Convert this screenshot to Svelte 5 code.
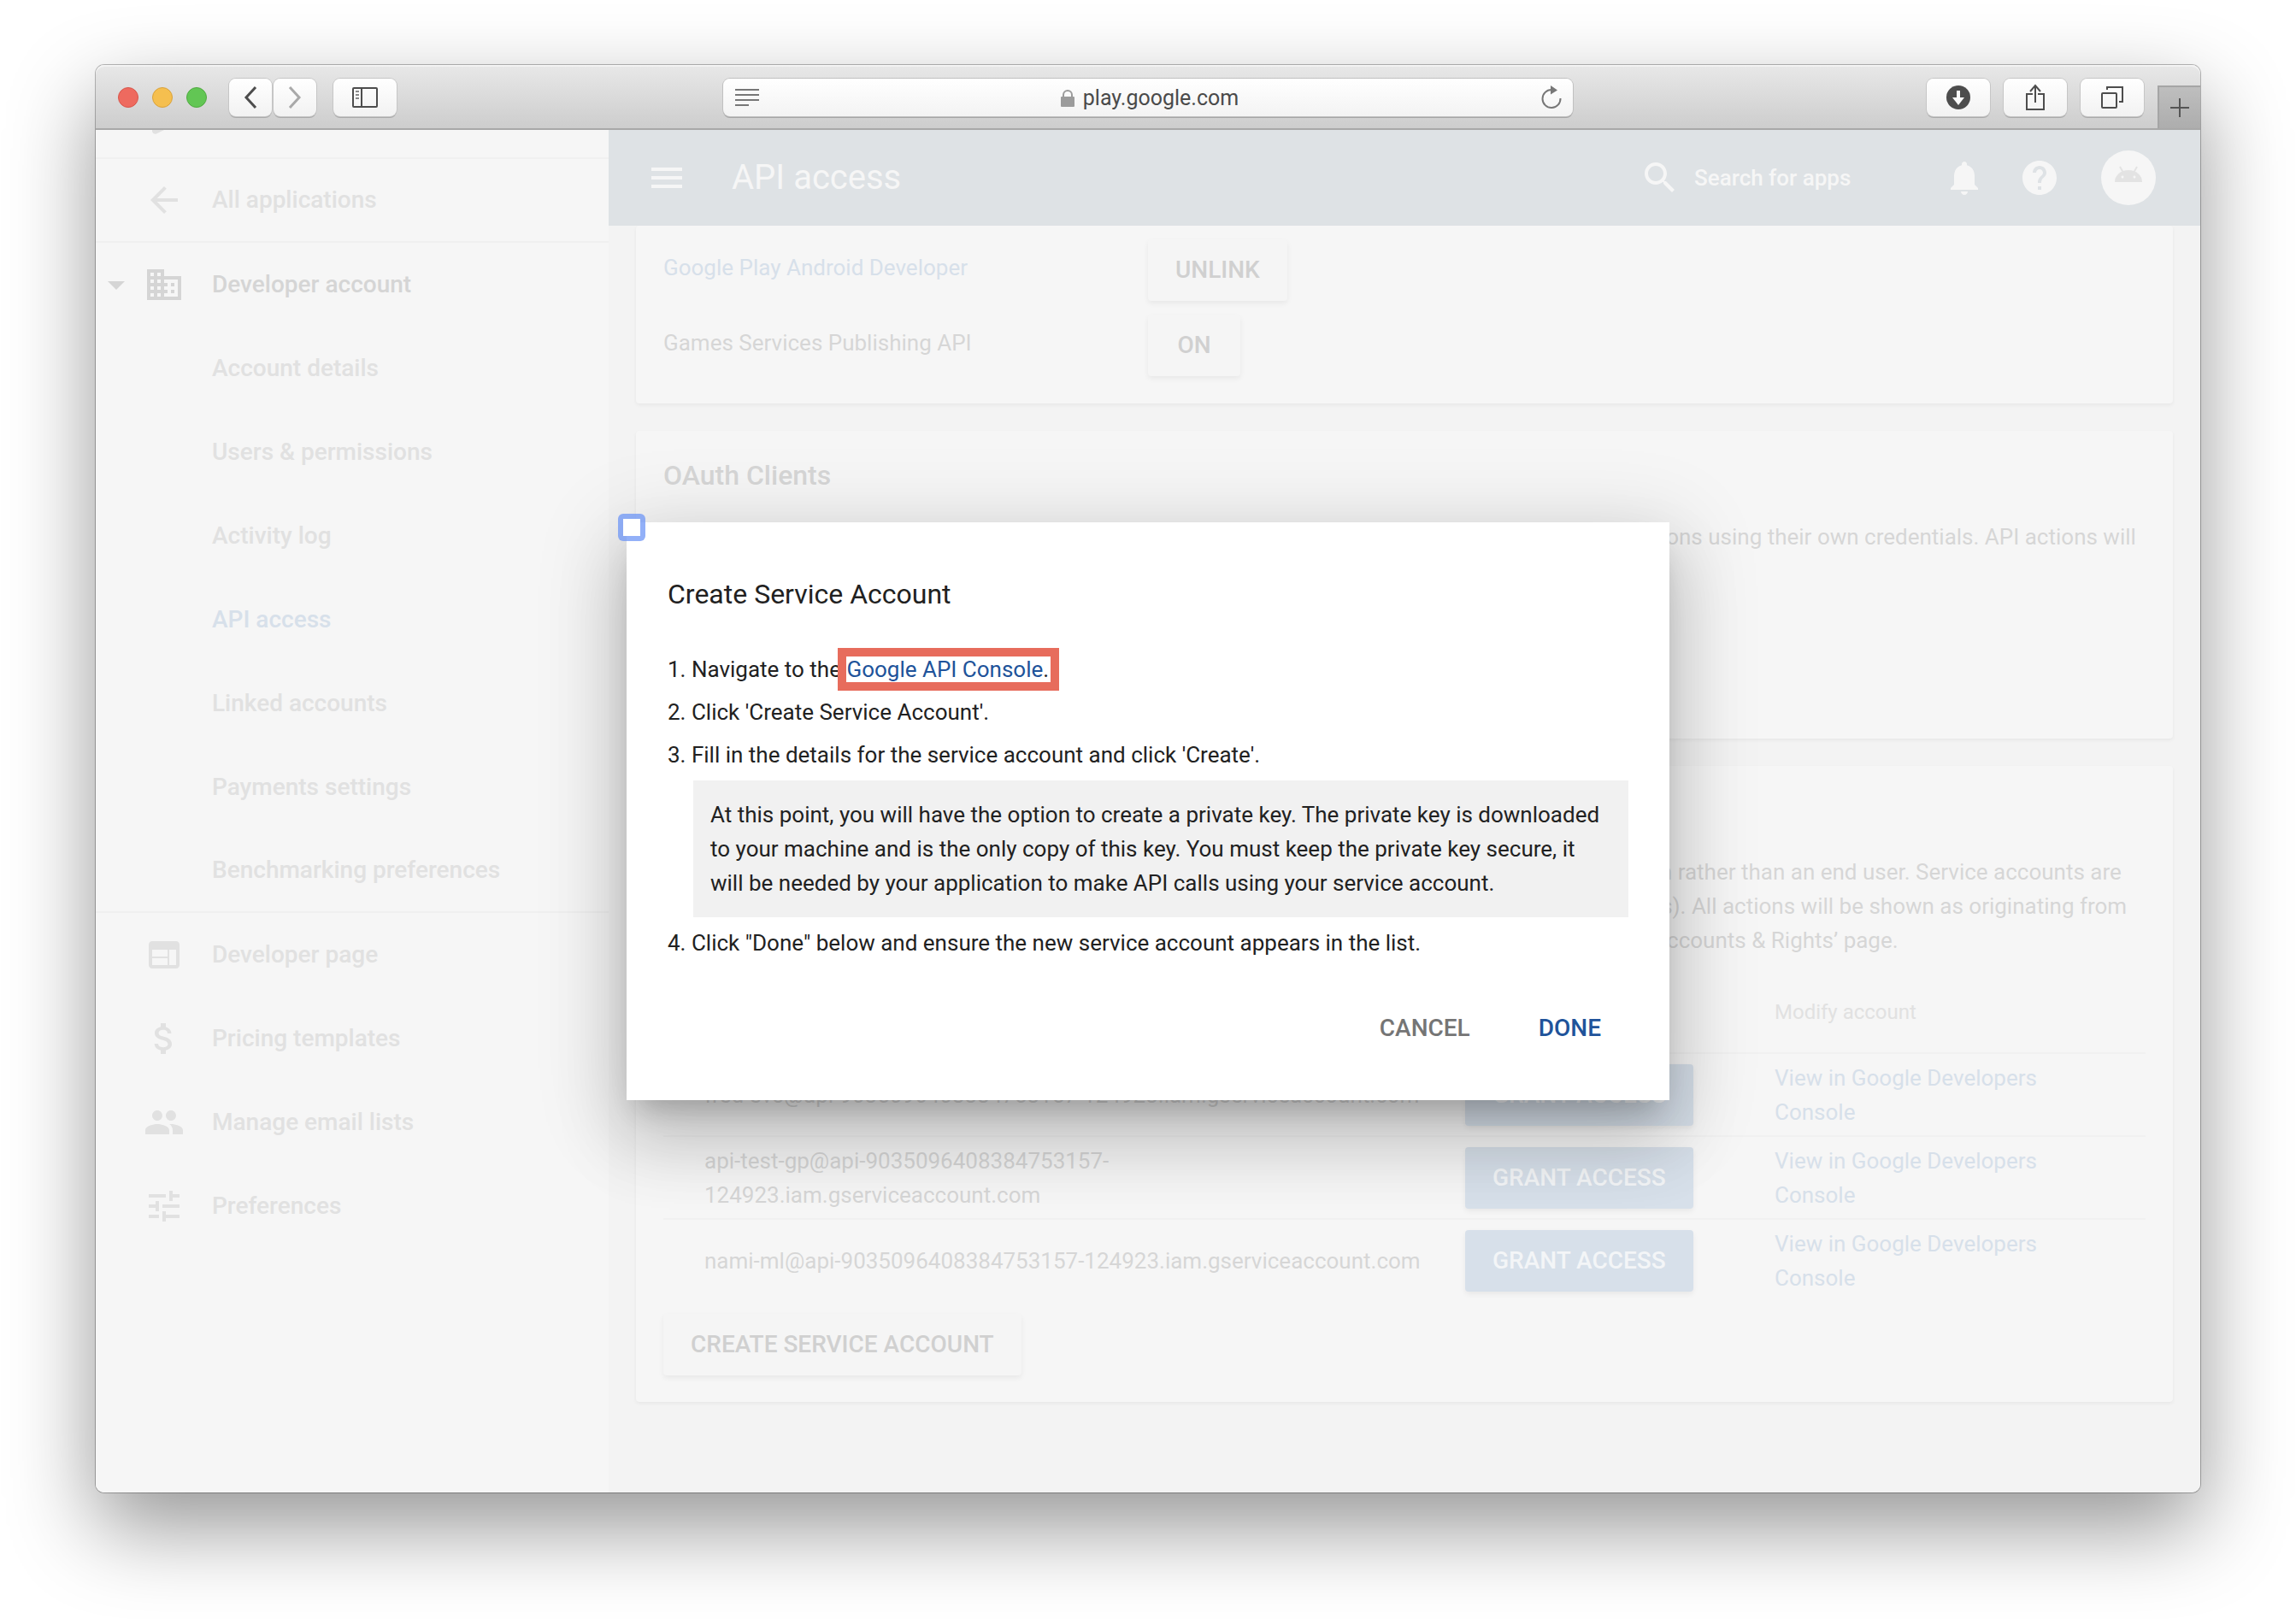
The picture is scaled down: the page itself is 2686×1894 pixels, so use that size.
<script>
  const paths = {
    back: 'M20 11H7.83l5.59-5.59L12 4l-8 8 8 8 1.41-1.41L7.83 13H20v-2z',
    business: 'M12 7V3H2v18h20V7H12zM6 19H4v-2h2v2zm0-4H4v-2h2v2zm0-4H4V9h2v2zm0-4H4V5h2v2zm4 12H8v-2h2v2zm0-4H8v-2h2v2zm0-4H8V9h2v2zm0-4H8V5h2v2zm10 12h-8v-2h2v-2h-2v-2h2v-2h-2V9h8v10zm-2-8h-2v2h2v-2zm0 4h-2v2h2v-2z',
    web: 'M19 4H5c-1.1 0-2 .9-2 2v12c0 1.1.9 2 2 2h14c1.1 0 2-.9 2-2V6c0-1.1-.9-2-2-2zm-5 14H5v-4h9v4zm0-5H5V9h9v4zm5 5h-4V9h4v9z',
    dollar: 'M11.8 10.9c-2.27-.59-3-1.2-3-2.15 0-1.09 1.01-1.85 2.7-1.85 1.78 0 2.44.85 2.5 2.1h2.21c-.07-1.72-1.12-3.3-3.21-3.81V3h-3v2.16c-1.94.42-3.5 1.68-3.5 3.61 0 2.31 1.91 3.46 4.7 4.13 2.5.6 3 1.48 3 2.41 0 .69-.49 1.79-2.7 1.79-2.06 0-2.87-.92-2.98-2.1h-2.2c.12 2.19 1.76 3.42 3.68 3.83V21h3v-2.15c1.95-.37 3.5-1.5 3.5-3.55 0-2.84-2.43-3.81-4.7-4.4z',
    people: 'M16 11c1.66 0 2.99-1.34 2.99-3S17.66 5 16 5c-1.66 0-3 1.34-3 3s1.34 3 3 3zm-8 0c1.66 0 2.99-1.34 2.99-3S9.66 5 8 5C6.34 5 5 6.34 5 8s1.34 3 3 3zm0 2c-2.33 0-7 1.17-7 3.500V19h14v-2.500c0-2.330-4.670-3.500-7-3.500zm8 0c-.29 0-.62.02-.97.05 1.160.840 1.970 1.970 1.970 3.450V19h6v-2.500c0-2.330-4.670-3.500-7-3.500z',
    tune: 'M3 17v2h6v-2H3zM3 5v2h10V5H3zm10 16v-2h8v-2h-8v-2h-2v6h2zM7 9v2H3v2h4v2h2V9H7zm14 4v-2H11v2h10zm-6-4h2V7h4V5h-4V3h-2v6z',
    caret: 'M7 10l5 5 5-5z',
    menu: 'M3 18h18v-2H3v2zm0-5h18v-2H3v2zm0-7v2h18V6H3z',
    search: 'M15.5 14h-.79l-.28-.27C15.41 12.59 16 11.11 16 9.500 16 5.910 13.090 3 9.500 3S3 5.910 3 9.500 5.910 16 9.500 16c1.610 0 3.090-.590 4.230-1.570l.270.280v.790l5 4.990L20.490 19l-4.990-5zm-6 0C7.010 14 5 11.990 5 9.500S7.010 5 9.500 5 14 7.010 14 9.500 11.990 14 9.500 14z',
    bell: 'M12 22c1.100 0 2-.900 2-2h-4c0 1.100.900 2 2 2zm6-6v-5c0-3.070-1.630-5.640-4.500-6.320V4c0-.830-.670-1.500-1.500-1.500s-1.500.670-1.500 1.500v.680C7.640 5.360 6 7.920 6 11v5l-2 2v1h16v-1l-2-2z',
    help: 'M12 2C6.480 2 2 6.480 2 12s4.480 10 10 10 10-4.480 10-10S17.520 2 12 2zm1 17h-2v-2h2v2zm2.070-7.750l-.900.920C13.450 12.900 13 13.500 13 15h-2v-.500c0-1.100.450-2.100 1.170-2.830l1.240-1.260c.370-.360.590-.860.590-1.410 0-1.100-.900-2-2-2s-2 .900-2 2H8c0-2.210 1.790-4 4-4s4 1.790 4 4c0 .880-.360 1.680-.930 2.250z'
  };

  const account = ['Account details', 'Users & permissions', 'Activity log', 'API access', 'Linked accounts', 'Payments settings', 'Benchmarking preferences'];
  const tools = [
    { icon: paths.web, label: 'Developer page' },
    { icon: paths.dollar, label: 'Pricing templates' },
    { icon: paths.people, label: 'Manage email lists' },
    { icon: paths.tune, label: 'Preferences' }
  ];
  const emails = [
    'fred-svc@api-9035096408384753157-124923.iam.gserviceaccount.com',
    'api-test-gp@api-9035096408384753157-124923.iam.gserviceaccount.com',
    'nami-ml@api-9035096408384753157-124923.iam.gserviceaccount.com'
  ];
</script>

{#snippet icon(d)}
  <svg class="icon" viewBox="0 0 24 24" aria-hidden="true"><path {d} /></svg>
{/snippet}

<div class="desktop">
  <div class="window">
    <header class="toolbar">
      <div class="lights"><i class="red"></i><i class="yellow"></i><i class="green"></i></div>
      <div class="nav">
        <button class="tool half" aria-label="Back"><svg width="16" height="28" viewBox="0 0 16 28"><path d="M14 2 3 14 14 26" fill="none" stroke="#4d4d4d" stroke-width="3" /></svg></button>
        <button class="tool half" aria-label="Forward"><svg width="16" height="28" viewBox="0 0 16 28"><path d="M2 2l11 12L2 26" fill="none" stroke="#a9a9a9" stroke-width="3" /></svg></button>
      </div>
      <button class="tool" aria-label="Show sidebar">
        <svg width="30" height="24" viewBox="0 0 30 24" fill="none" stroke="#4d4d4d" stroke-width="2"><rect x="1" y="1" width="28" height="22" rx="1" /><path d="M11 1v22" /><path d="M4 5h4M4 9h4M4 13h4" stroke="#8a8a8a" /></svg>
      </button>
      <div class="address">
        <svg width="28" height="20" viewBox="0 0 28 20" stroke="#777" stroke-width="2"><path d="M0 1h28M0 7h28M0 13h28M0 19h16" /></svg>
        <span class="host">
          <svg width="16" height="20" viewBox="0 0 16 20"><rect y="8" width="16" height="12" rx="1" fill="#9b9b9b" /><path d="M3 9V6a5 5 0 0 1 10 0v3" fill="none" stroke="#9b9b9b" stroke-width="2" /></svg>
          play.google.com
        </span>
        <button class="reload" aria-label="Reload"><svg width="26" height="28" viewBox="0 0 26 28"><path d="M13 5A10.500 10.500 0 1 0 23.500 15" fill="none" stroke="#777" stroke-width="2" /><path d="M12 0l8 5.500-8 5z" fill="#777" /></svg></button>
      </div>
      <div class="actions">
        <button class="tool" aria-label="Downloads"><svg width="28" height="28" viewBox="0 0 28 28"><circle cx="14" cy="14" r="14" fill="#4d4d4d" /><path d="M12 6h4v8h5l-7 9-7-9h5z" fill="#fafafa" /></svg></button>
        <button class="tool" aria-label="Share"><svg width="24" height="32" viewBox="0 0 24 32" fill="none" stroke="#4d4d4d" stroke-width="2"><path d="M9 12H2v18h20V12h-7M12 22V3M6 9l6-7 6 7" /></svg></button>
        <button class="tool" aria-label="Tab overview"><svg width="26" height="26" viewBox="0 0 26 26" fill="none" stroke="#4d4d4d" stroke-width="2"><rect x="1" y="8" width="17" height="17" rx="1" /><path d="M7 4V1h18v17h-4" /></svg></button>
      </div>
      <button class="newtab" aria-label="New tab"><svg width="22" height="22" viewBox="0 0 22 22"><path d="M11 0v22M0 11h22" stroke="#555" stroke-width="2" /></svg></button>
    </header>

    <div class="page">
      <nav class="side">
        <div class="logo"><svg width="14" height="5" viewBox="0 0 14 5"><path d="M0 0h14L5 4.500Q1 5.500 0 2z" /></svg></div>
        <a class="item line" href="#apps"><span class="slot"></span>{@render icon(paths.back)}<span>All applications</span></a>
        <a class="item strong" href="#account"><span class="slot">{@render icon(paths.caret)}</span>{@render icon(paths.business)}<span>Developer account</span></a>
        {#each account as label, i}
          <a class="item sub" class:current={label === 'API access'} class:line={i === account.length - 1} href="#item">{label}</a>
        {/each}
        {#each tools as t}
          <a class="item" href="#tool"><span class="slot"></span>{@render icon(t.icon)}<span>{t.label}</span></a>
        {/each}
      </nav>

      <div class="content">
        <header class="appbar">
          <button class="plain" aria-label="Menu">{@render icon(paths.menu)}</button>
          <h1>API access</h1>
          <label class="search">{@render icon(paths.search)}<input type="text" placeholder="Search for apps" aria-label="Search for apps" /></label>
          <button class="plain" aria-label="Notifications">{@render icon(paths.bell)}</button>
          <button class="plain help" aria-label="Help">{@render icon(paths.help)}</button>
          <button class="avatar" aria-label="Account"><svg width="32" height="28" viewBox="0 0 32 28"><path d="M0 19a16 14 0 0 1 32 0z" /><path d="M6 1l4 7M26 1l-4 7" class="antenna" /><circle cx="9" cy="13" r="1.500" class="eye" /><circle cx="23" cy="13" r="1.500" class="eye" /></svg></button>
        </header>
        <main>
          <section class="card linked">
            <div class="api"><a href="#project">Google Play Android Developer</a><button class="btn">UNLINK</button></div>
            <div class="api"><span>Games Services Publishing API</span><button class="btn">ON</button></div>
          </section>
          <section class="card oauth">
            <h2>OAuth Clients</h2>
            <p>OAuth clients enable each user of your Google Play Developer Console to access and perform API actions using their own credentials. API actions will be shown as originating from that user.</p>
          </section>
          <section class="card service">
            <h2>Service Accounts</h2>
            <p>Service accounts allow access to the Google Play Developer Publishing API on behalf of an application rather than an end user. Service accounts are ideal for accessing the API from an unattended server, such as an automated build server (e.g. Jenkins). All actions will be shown as originating from the service account. You can configure fine grained permissions for the service account on the ‘User Accounts &amp; Rights’ page.</p>
            <table>
              <thead><tr><th class="email">Email</th><th class="grant">Permission</th><th>Modify account</th></tr></thead>
              <tbody>
                {#each emails as email}
                  <tr><td class="email">{email}</td><td class="grant"><button class="btn blue">GRANT ACCESS</button></td><td><a href="#console">View in Google Developers Console</a></td></tr>
                {/each}
              </tbody>
            </table>
            <button class="btn">CREATE SERVICE ACCOUNT</button>
          </section>
        </main>
      </div>

      <div class="overlay">
        <div class="dialog" role="dialog" aria-labelledby="dialog-title">
          <span class="marker"></span>
          <h2 id="dialog-title">Create Service Account</h2>
          <ol>
            <li>1. Navigate to the <span class="target"><a href="#console">Google API Console</a>.</span></li>
            <li>2. Click 'Create Service Account'.</li>
            <li>3. Fill in the details for the service account and click 'Create'.
              <div class="note">At this point, you will have the option to create a private key. The private key is downloaded to your machine and is the only copy of this key. You must keep the private key secure, it will be needed by your application to make API calls using your service account.</div>
            </li>
            <li>4. Click "Done" below and ensure the new service account appears in the list.</li>
          </ol>
          <div class="buttons"><button>CANCEL</button><button class="done">DONE</button></div>
        </div>
      </div>
    </div>
  </div>
</div>

<style>
  :global(body) { background: #fff; }
  * { box-sizing: border-box; }
  .desktop { min-height: 100vh; padding: 76px 112px 148px; display: flex; font: 26px/40px Roboto, "Liberation Sans", sans-serif; }
  .window { flex: 1; display: flex; flex-direction: column; border-radius: 10px; box-shadow: 0 0 0 1px rgba(0,0,0,.27), 0 40px 100px rgba(0,0,0,.42); }
  button { font: inherit; border: 0; margin: 0; padding: 0; background: none; color: inherit; }
  a { color: #d7e0ea; text-decoration: none; }
  svg { display: block; flex: none; }
  .icon { width: 48px; height: 48px; fill: currentColor; }

  .toolbar { height: 76px; display: flex; align-items: center; padding: 2px 0 0 26px; border-bottom: 2px solid #a8a8a8; border-radius: 10px 10px 0 0; background: linear-gradient(#e8e8e8, #cdcdcd); box-shadow: inset 0 2px #f3f3f3; }
  .lights { display: flex; gap: 16px; margin-right: 26px; }
  .lights i { width: 24px; height: 24px; border-radius: 50%; border: 1px solid; }
  .lights .red { background: #ee6a5f; border-color: #d8564b; }
  .lights .yellow { background: #f5bf4f; border-color: #d9a23c; }
  .lights .green { background: #62c654; border-color: #50aa41; }
  .nav { display: flex; gap: 2px; margin-right: 20px; }
  .tool { width: 74px; height: 44px; border-radius: 8px; background: linear-gradient(#fff, #f2f2f2); box-shadow: 0 0 0 1px #c6c6c6, 0 2px 0 #aaa; display: flex; align-items: center; justify-content: center; }
  .half { width: 50px; }
  .address { flex: 1; height: 44px; margin: 0 414px 0 382px; padding: 0 12px 0 14px; border-radius: 8px; background: linear-gradient(#fff, #f3f3f3); box-shadow: 0 0 0 1px #c0c0c0, 0 2px 0 #a5a5a5; display: flex; align-items: center; justify-content: space-between; }
  .host { display: flex; align-items: center; gap: 10px; padding-top: 2px; color: #4a4a4a; font-size: 25px; }
  .actions { display: flex; gap: 16px; margin-right: 16px; }
  .newtab { align-self: flex-end; width: 50px; height: 50px; background: linear-gradient(#bebebe, #adadad); border: solid #a5a5a5; border-width: 2px 0 0 2px; display: flex; align-items: center; justify-content: center; }

  .page { flex: 1; display: flex; position: relative; overflow: hidden; background: #f3f3f3; border-radius: 0 0 10px 10px; }
  .side { width: 600px; flex: none; background: #f6f6f6; color: #e1e1e1; font-size: 28px; font-weight: 500; }
  .logo { height: 34px; border-bottom: 2px solid #f0f0f0; padding-left: 66px; }
  .logo path { fill: #e1e1e1; }
  .item { height: 98px; display: flex; align-items: center; color: inherit; }
  .item.line { border-bottom: 2px solid #f0f0f0; }
  .item .icon { margin-right: 32px; }
  .slot { width: 56px; height: 48px; flex: none; }
  .item.strong { color: #d5d5d5; }
  .item.sub { padding-left: 136px; }
  .item.current { color: #d7e0ea; }

  .content { flex: 1; min-width: 0; display: flex; flex-direction: column; }
  .appbar { height: 112px; flex: none; background: #dee2e5; color: #f6f6f6; display: flex; align-items: center; padding: 0 52px 0 44px; }
  h1 { margin: 0 auto 0 52px; font-size: 40px; line-height: 48px; font-weight: 400; }
  .search { display: flex; align-items: center; gap: 16px; margin-right: 28px; }
  .search input { width: 264px; border: 0; padding: 0; background: none; color: inherit; font: inherit; font-weight: 500; outline: 0; }
  .search input::placeholder { color: inherit; opacity: 1; }
  .help { margin: 0 48px 0 40px; }
  .avatar { width: 64px; height: 64px; border-radius: 50%; background: #f6f6f6; display: flex; align-items: center; justify-content: center; }
  .avatar svg { fill: #e3e3e3; }
  .avatar .antenna { stroke: #e3e3e3; stroke-width: 2; }
  .avatar .eye { fill: #f6f6f6; }
  main { padding: 0 32px; color: #d6d6d6; display: flex; flex-direction: column; gap: 32px; }
  .card { background: #f6f6f6; border-radius: 4px; padding: 32px; box-shadow: 0 2px 4px rgba(0,0,0,.05); }
  .linked { padding-top: 16px; display: flex; flex-direction: column; gap: 16px; }
  .api { display: flex; height: 72px; }
  .api > :first-child { width: 567px; padding-top: 13px; }
  .btn { height: 72px; min-width: 108px; padding: 0 32px; border-radius: 4px; font-size: 28px; font-weight: 500; color: #d0d0d0; background: #f5f5f5; box-shadow: 0 3px 6px rgba(0,0,0,.06); }
  .blue { background: #d7e0ea; color: #f3f5f7; }
  h2 { margin: 0; font-size: 32px; line-height: 40px; font-weight: 500; }
  p { margin: 32px 0 0; }
  .oauth { height: 360px; }
  .service { height: 744px; }
  table { width: 100%; table-layout: fixed; border-collapse: collapse; margin: 16px 0 14px; }
  th { height: 96px; padding: 0; font-size: 24px; font-weight: 400; text-align: left; color: #e1e1e1; }
  td { height: 97px; padding: 0; border-top: 2px solid #f1f1f1; }
  .email { width: 938px; padding: 0 46px 0 48px; }
  .grant { width: 362px; }
  td:last-child { padding-right: 80px; }

  .overlay { position: absolute; inset: 0; display: flex; align-items: center; justify-content: center; }
  .dialog { position: relative; width: 1220px; padding: 64px 48px 40px; background: #fff; color: #212121; box-shadow: 0 48px 76px 6px rgba(0,0,0,.14), 0 22px 30px -14px rgba(0,0,0,.2), 0 18px 92px 16px rgba(0,0,0,.12); }
  .dialog a, .done { color: #20539a; }
  .dialog h2 { font-weight: 400; margin-bottom: 43px; }
  .marker { position: absolute; left: -10px; top: -10px; width: 32px; height: 32px; border: 6px solid rgba(110,150,245,.75); border-radius: 6px; background: #fff; background-clip: padding-box; }
  ol { list-style: none; margin: 0; padding: 0; }
  li { padding: 5px 0; }
  .target { position: relative; }
  .target::after { content: ""; position: absolute; inset: -10px -12px -10px -10px; border: 10px solid #e76c5c; }
  .note { margin: 10px 0 0 30px; padding: 20px; background: #f1f1f1; }
  .buttons { display: flex; justify-content: flex-end; gap: 80px; margin-top: 32px; padding: 23px 32px 24px 0; font-size: 28px; font-weight: 500; color: #757575; }
</style>
